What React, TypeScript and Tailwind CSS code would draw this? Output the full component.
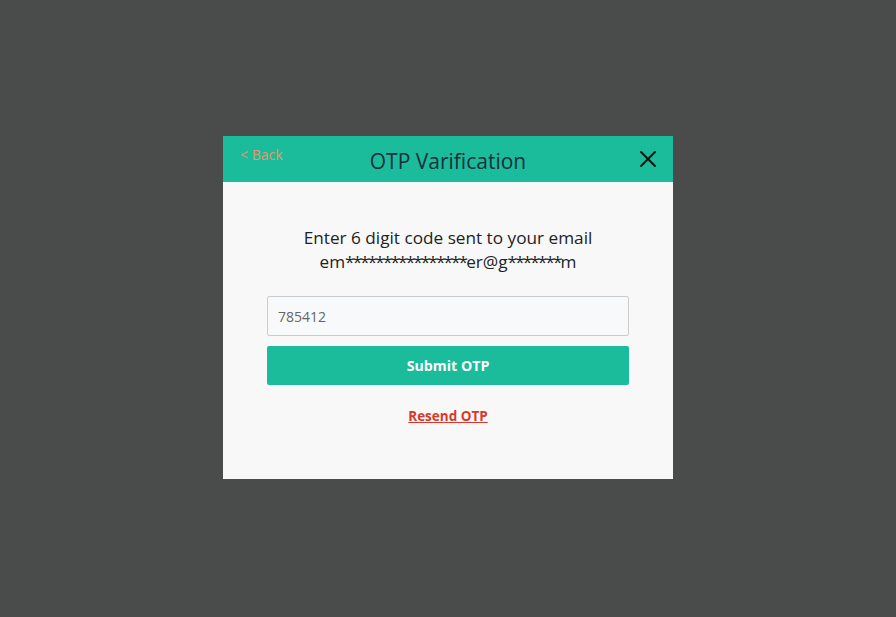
import { X } from "lucide-react";

// OTP verification modal over a dimmed backdrop
function OtpModal() {
  return (
    <div className="w-[450px] h-[343px] bg-[#f8f8f8] flex flex-col">
      <div className="h-[46px] bg-[#1abc9c] flex items-center justify-between px-[17px] relative">
        <button className="text-[14px] text-[#e8956a] leading-none mt-[-8px]">&lt; Back</button>
        <h2 className="absolute left-0 right-0 top-[11px] text-center text-[21px] leading-[28px] text-[#1b2f3a] pointer-events-none">
          OTP Varification
        </h2>
        <button className="text-[#111] mr-[-6px]">
          <X size={28} strokeWidth={1.7} />
        </button>
      </div>
      <div className="flex flex-col items-center pt-[44px] px-[44px]">
        <p className="text-[17.2px] leading-[24px] text-[#222] text-center">
          Enter 6 digit code sent to your email
          <br />
          em<span className="tracking-[-1.9px]">****************</span>er@g
          <span className="tracking-[-1.9px]">*******</span>m
        </p>
        <input
          className="mt-[22px] w-full h-[40px] border border-[#ccc] rounded-[2px] bg-[#f8f9fa] px-[10px] text-[14px] text-[#666] outline-none"
          defaultValue="785412"
        />
        <button className="mt-[10px] w-full h-[39px] bg-[#1abc9c] rounded-[2px] text-white font-bold text-[14.2px]">
          Submit OTP
        </button>
        <a href="#" className="mt-[21px] text-[13.5px] font-bold text-[#d9382a] underline">
          Resend OTP
        </a>
      </div>
    </div>
  );
}

export default function App() {
  return (
    <div
      className="w-[896px] h-[617px] bg-[#4a4c4b] flex items-center justify-center pb-[2px]"
      style={{ fontFamily: '"Open Sans", "Noto Sans", sans-serif' }}
    >
      <OtpModal />
    </div>
  );
}
